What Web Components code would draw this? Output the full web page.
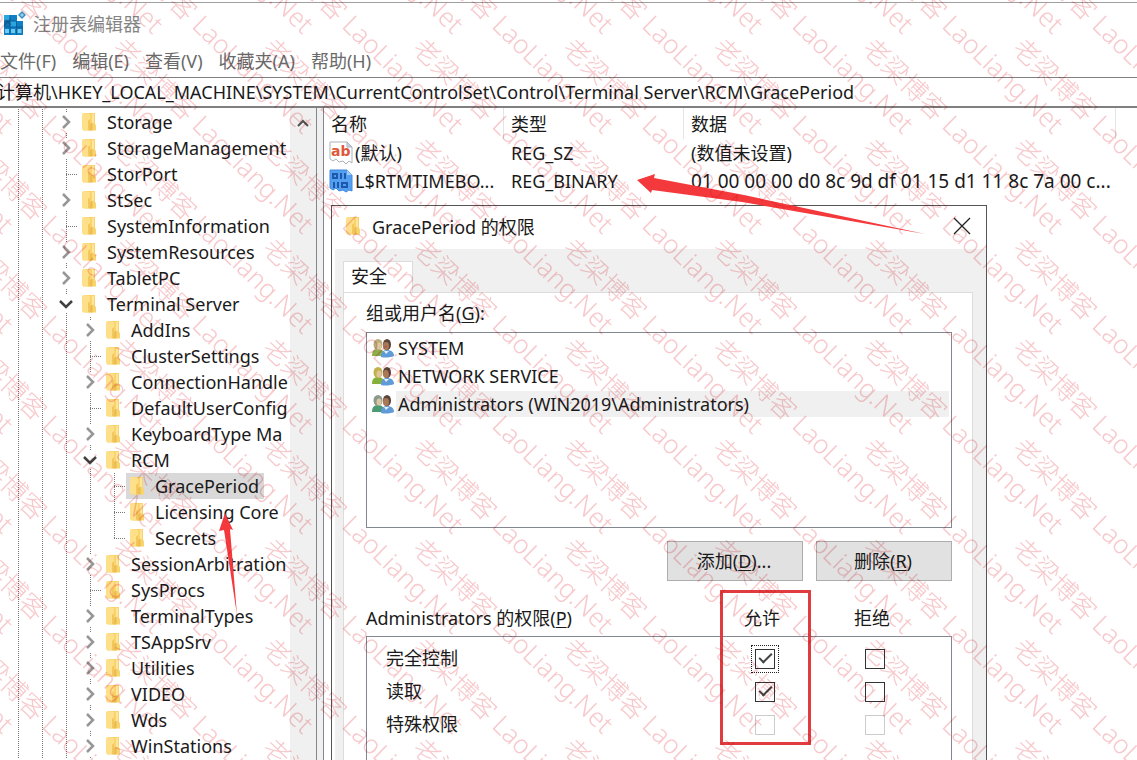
<!DOCTYPE html>
<html lang="zh-CN">
<head>
<meta charset="utf-8">
<title>注册表编辑器</title>
<style>
    html, body{
        margin: 0;
        height: 100%;
        overflow: hidden;
        background: #fff;
        font-family: "Noto Sans", "Noto Sans CJK SC", sans-serif;
        font-size: 18px;
        color: #1a1a1a;
    }
</style>
</head>
<body>

<reg-editor>
    <reg-titlebar slot="titulo">注册表编辑器</reg-titlebar>
    <reg-menu slot="menu"></reg-menu>
    <reg-address slot="ruta" valor="计算机\HKEY_LOCAL_MACHINE\SYSTEM\CurrentControlSet\Control\Terminal Server\RCM\GracePeriod"></reg-address>
    <reg-tree slot="arbol"></reg-tree>
    <reg-values slot="valores"></reg-values>
    <perm-dialog slot="dialogo"></perm-dialog>
</reg-editor>
<nota-flechas></nota-flechas>
<marca-agua texto="老梁博客 LaoLiang.Net"></marca-agua>

<script>
const carpeta = `
    <svg class="carpeta" width="14" height="18" viewBox="0 0 14 18" aria-hidden="true">
        <path d="M1 0h12v11l1 1v5.500H1z" fill="#f9d36b"/>
        <path d="M0 1l2-1 6 1v17l-8-1.500z" fill="#ffe08a"/>
        <path d="M6 8l2-2v11.500l-2-.500z" fill="#f3c75c"/>
        <path d="M8 11l2.500-1.500V17.500H8z" fill="#eabd55"/>
        <path d="M10 1h2v9h-2z" fill="#fde69c"/>
    </svg>`;

class RegEditorComponent extends HTMLElement {

    constructor(){
        super();
        this._shadow = this.attachShadow({ mode: 'open' });
    }

    connectedCallback(){
        this._shadow.innerHTML = `
            <style>
                :host{
                    display: flex;
                    flex-direction: column;
                    height: 100vh;
                    overflow: hidden;
                }

                .borde{
                    height: 2px;
                    border-bottom: 1px solid #a0a0a0;
                    flex: none;
                }

                .cuerpo{
                    flex: 1;
                    min-height: 0;
                    display: flex;
                }

                .divisor{
                    width: 6px;
                    flex: none;
                    background: #f0f0f0;
                    border-left: 1px solid #828790;
                    border-right: 1px solid #828790;
                }

                .panel{
                    flex: 1;
                    min-width: 0;
                    position: relative;
                }
            </style>

            <div class="borde"></div>
            <slot name="titulo"></slot>
            <slot name="menu"></slot>
            <slot name="ruta"></slot>
            <div class="cuerpo">
                <slot name="arbol"></slot>
                <div class="divisor"></div>
                <div class="panel">
                    <slot name="valores"></slot>
                    <slot name="dialogo"></slot>
                </div>
            </div>
        `;
    }
}

class RegTitlebarComponent extends HTMLElement {

    constructor(){
        super();
        this._shadow = this.attachShadow({ mode: 'open' });
    }

    connectedCallback(){
        this._shadow.innerHTML = `
            <style>
                :host{
                    display: flex;
                    align-items: center;
                    gap: 7px;
                    height: 40px;
                    padding: 0 0 2px 3px;
                    flex: none;
                    color: #858585;
                }
            </style>

            <svg width="23" height="24" viewBox="0 0 23 24" aria-hidden="true">
                <path d="M1 4h13v6h6v14H1z" fill="#0f80c4"/>
                <path d="M1 4h6v6H1zM7 10h6v6H7z" fill="#29a5df"/>
                <path d="M1 10h6v6H1zM14 16h6v6h-6z" fill="#1173b4"/>
                <path d="M2 18h4v4H2zM8 18h4v4H8zM14.500 18h4v4h-4z" fill="#6ccaf0"/>
                <path d="M1 10h12M1 16h19M7 4v20M13.500 10v14" stroke="#0a5f9c" stroke-width="1"/>
                <path d="M19 0l4 4-4 4-4-4z" fill="#3a8fc2"/>
                <path d="M19 2l2 2-2 2-2-2z" fill="#8ed2ee"/>
            </svg>
            <slot></slot>
        `;
    }
}

class RegMenuComponent extends HTMLElement {

    constructor(){
        super();
        this._shadow = this.attachShadow({ mode: 'open' });
        this.opciones = ["文件(F)", "编辑(E)", "查看(V)", "收藏夹(A)", "帮助(H)"];
    }

    connectedCallback(){
        this._shadow.innerHTML = `
            <style>
                :host{
                    display: block;
                    height: 32px;
                    flex: none;
                }

                nav{
                    display: flex;
                    gap: 16px;
                }

                button{
                    font: inherit;
                    line-height: 32px;
                    color: #6a6a6a;
                    background: none;
                    border: none;
                    padding: 0;
                }
            </style>

            <nav>${this.opciones.map(o => `<button>${o}</button>`).join("")}</nav>
        `;
    }
}

class RegAddressComponent extends HTMLElement {

    constructor(){
        super();
        this._shadow = this.attachShadow({ mode: 'open' });
    }

    connectedCallback(){
        this._shadow.innerHTML = `
            <style>
                :host{
                    display: block;
                    flex: none;
                    border-top: 1px solid #808080;
                    border-bottom: 2px solid #808080;
                    overflow: hidden;
                }

                input{
                    display: block;
                    box-sizing: border-box;
                    width: 100%;
                    height: 28px;
                    margin-left: -3px;
                    padding: 0 0 2px;
                    border: none;
                    outline: none;
                    background: #fff;
                    font: inherit;
                    color: inherit;
                }
            </style>

            <input type="text" aria-label="地址">
        `;

        this._shadow.querySelector("input").value = this.getAttribute("valor");
    }
}

class RegTreeComponent extends HTMLElement {

    constructor(){
        super();
        this._shadow = this.attachShadow({ mode: 'open' });

        // [nivel, estado, nombre] -- estado: > cerrado, v abierto, - hoja, L ultima hoja
        this.nodos = [
            [2, ">", "Storage"],
            [2, ">", "StorageManagement"],
            [2, "-", "StorPort"],
            [2, ">", "StSec"],
            [2, "-", "SystemInformation"],
            [2, ">", "SystemResources"],
            [2, ">", "TabletPC"],
            [2, "v", "Terminal Server"],
            [3, ">", "AddIns"],
            [3, "-", "ClusterSettings"],
            [3, ">", "ConnectionHandle"],
            [3, "-", "DefaultUserConfig"],
            [3, ">", "KeyboardType Ma"],
            [3, "v", "RCM"],
            [4, "-", "GracePeriod"],
            [4, "-", "Licensing Core"],
            [4, "L", "Secrets"],
            [3, ">", "SessionArbitration"],
            [3, "-", "SysProcs"],
            [3, ">", "TerminalTypes"],
            [3, ">", "TSAppSrv"],
            [3, ">", "Utilities"],
            [3, ">", "VIDEO"],
            [3, ">", "Wds"],
            [3, ">", "WinStations"]
        ];
        this.seleccionado = "GracePeriod";
    }

    celda(estado){
        if(estado === ">"){
            return `<span class="guia nodo"><svg width="12" height="14" viewBox="0 0 12 14"><path d="M3 1l6 6-6 6" fill="none" stroke="#969696" stroke-width="2.500"/></svg></span>`;
        }
        if(estado === "v"){
            return `<span class="guia nodo"><svg width="14" height="12" viewBox="0 0 14 12"><path d="M1 3l6 6 6-6" fill="none" stroke="#404040" stroke-width="2.500"/></svg></span>`;
        }
        return `<span class="guia rama ${estado === "L" ? "ultima" : ""}"></span>`;
    }

    fila([nivel, estado, nombre]){
        const clase = nombre === this.seleccionado ? "clave sel" : "clave";
        return `
            <li>
                ${`<span class="guia"></span>`.repeat(nivel)}${this.celda(estado)}
                <span class="${clase}">${carpeta}${nombre}</span>
            </li>`;
    }

    connectedCallback(){
        this._shadow.innerHTML = `
            <style>
                :host{
                    display: flex;
                    flex: none;
                    width: 316px;
                    overflow: hidden;
                }

                ul{
                    flex: 1;
                    min-width: 0;
                    overflow: hidden;
                    list-style: none;
                    margin: 0;
                    padding: 1px 0 0 6px;
                }

                li{
                    display: flex;
                    height: 26px;
                    line-height: 26px;
                    white-space: nowrap;
                }

                .guia{
                    flex: none;
                    width: 24px;
                    background: repeating-linear-gradient(#777 0 1px, transparent 1px 2px) 12px 0 / 1px 100% no-repeat;
                }

                .rama{
                    background:
                        repeating-linear-gradient(#777 0 1px, transparent 1px 2px) 12px 0 / 1px 100% no-repeat,
                        repeating-linear-gradient(90deg, #777 0 1px, transparent 1px 2px) 12px 13px / 12px 1px no-repeat;
                }

                .ultima{
                    background-size: 1px 13px, 12px 1px;
                }

                .nodo{
                    display: flex;
                    align-items: center;
                    justify-content: center;
                }

                .nodo svg{
                    background: #fff;
                    padding: 3px 0;
                }

                .clave{
                    display: flex;
                    align-items: center;
                    padding: 0 5px 0 4px;
                }

                .carpeta{
                    flex: none;
                    margin-right: 11px;
                }

                .sel{
                    background: #d9d9d9;
                }

                .barra{
                    flex: none;
                    width: 26px;
                    background: #f0f0f0;
                    display: flex;
                    justify-content: center;
                }

                .barra button{
                    width: 26px;
                    height: 30px;
                    padding: 0;
                    border: none;
                    background: none;
                }
            </style>

            <ul>${this.nodos.map(n => this.fila(n)).join("")}</ul>
            <div class="barra">
                <button aria-label="向上滚动">
                    <svg width="12" height="10" viewBox="0 0 12 10"><path d="M1 8l5-5 5 5" fill="none" stroke="#505050" stroke-width="2"/></svg>
                </button>
            </div>
        `;
    }
}

class RegValuesComponent extends HTMLElement {

    constructor(){
        super();
        this._shadow = this.attachShadow({ mode: 'open' });
    }

    connectedCallback(){
        this._shadow.innerHTML = `
            <style>
                :host{
                    display: block;
                }

                table{
                    width: 100%;
                    table-layout: fixed;
                    border-collapse: collapse;
                }

                th, td{
                    padding: 0 0 0 7px;
                    height: 28px;
                    line-height: 28px;
                    text-align: left;
                    font-weight: normal;
                    white-space: nowrap;
                }

                th{
                    height: 31px;
                    background: linear-gradient(#e5e5e5, #e5e5e5) right / 1px 100% no-repeat;
                }

                th:last-child{
                    background: none;
                }

                td:first-child{
                    padding-left: 5px;
                }

                .nombre{
                    display: flex;
                    align-items: center;
                    gap: 2px;
                }

                .nombre svg{
                    flex: none;
                }

                .binario{
                    font-size: 19px;
                }

                .c1{ width: 180px; }
                .c2{ width: 180px; }
                .c4{ width: 21px; }
            </style>

            <table>
                <colgroup><col class="c1"><col class="c2"><col><col class="c4"></colgroup>
                <thead>
                    <tr><th>名称</th><th>类型</th><th>数据</th><th></th></tr>
                </thead>
                <tbody>
                    <tr>
                        <td><div class="nombre">
                            <svg width="24" height="24" viewBox="0 0 24 24" aria-hidden="true">
                                <path d="M1 1h17l5 5v16l-3-2-3 3-3-3-4 1-3-3-3 2-3-2z" fill="#fff" stroke="#a9b3bd"/>
                                <path d="M18 1v5h5z" fill="#c9d2da" stroke="#a9b3bd"/>
                                <text x="2" y="15" font-family="DejaVu Sans, sans-serif" font-size="14" font-weight="bold" fill="#e0583a">ab</text>
                            </svg>
                            <span>(默认)</span>
                        </div></td>
                        <td>REG_SZ</td>
                        <td>(数值未设置)</td>
                        <td></td>
                    </tr>
                    <tr>
                        <td><div class="nombre">
                            <svg width="24" height="24" viewBox="0 0 24 24" aria-hidden="true">
                                <path d="M1 1h17l5 5v16l-3-1-3 2-3-2-4 1-3-3-3 2-3-2z" fill="#559ff0" stroke="#3f8ade"/>
                                <path d="M18 1v5h5z" fill="#9fccf8"/>
                                <g fill="none" stroke="#1c58ad" stroke-width="2">
                                    <rect x="4" y="5" width="4" height="4"/>
                                    <path d="M12 4v6M16 4v6M5 13v6M9 13v6"/>
                                    <rect x="13" y="14" width="5" height="4"/>
                                </g>
                            </svg>
                            <span>L$RTMTIMEBO...</span>
                        </div></td>
                        <td>REG_BINARY</td>
                        <td class="binario">01 00 00 00 d0 8c 9d df 01 15 d1 11 8c 7a 00 c...</td>
                        <td></td>
                    </tr>
                </tbody>
            </table>
        `;
    }
}

class PermDialogComponent extends HTMLElement {

    constructor(){
        super();
        this._shadow = this.attachShadow({ mode: 'open' });

        this.grupos = [
            ["SYSTEM", "#b8ad79", "#8fae4a"],
            ["NETWORK SERVICE", "#c3b04a", "#86b03c"],
            ["Administrators (WIN2019\\Administrators)", "#8b9a8c", "#4b9a74"]
        ];
        this.grupoActual = 2;

        this.permisos = [
            { nombre: "完全控制", permitir: true, clase: "foco" },
            { nombre: "读取", permitir: true, clase: "" },
            { nombre: "特殊权限", permitir: false, clase: "gris" }
        ];
    }

    iconoUsuarios(pelo, ropa){
        return `
            <svg width="22" height="20" viewBox="0 0 22 20" aria-hidden="true">
                <path d="M0 18c0-5 2-7 6-7s6 2 6 7z" fill="${ropa}"/>
                <ellipse cx="6" cy="6.500" rx="4.500" ry="5.500" fill="${pelo}"/>
                <ellipse cx="7" cy="8" rx="2.500" ry="3.500" fill="#dcc7a0"/>
                <path d="M9 19c0-5 2-7 6-7s7 2 7 6c-3 1.500-9 2-13 1z" fill="#5f9bd8"/>
                <ellipse cx="15" cy="6.500" rx="4" ry="5.500" fill="#5a4438"/>
                <ellipse cx="14" cy="8" rx="3" ry="4" fill="#a87858"/>
                <path d="M12 13l2 3 3-3z" fill="#e8f1fa"/>
            </svg>`;
    }

    connectedCallback(){

        const grupos = this.grupos.map(([nombre, pelo, ropa], i) => `
            <li>${this.iconoUsuarios(pelo, ropa)}<span class="${i === this.grupoActual ? "sel" : ""}">${nombre}</span></li>
        `).join("");

        const permisos = this.permisos.map(p => `
            <tr class="${p.clase}">
                <td>${p.nombre}</td>
                <td><span class="marco"><input type="checkbox" aria-label="允许 ${p.nombre}" ${p.permitir ? "checked" : ""} ${p.clase === "gris" ? "disabled" : ""}></span></td>
                <td><input type="checkbox" aria-label="拒绝 ${p.nombre}" ${p.clase === "gris" ? "disabled" : ""}></td>
                <td></td>
            </tr>
        `).join("");

        this._shadow.innerHTML = `
            <style>
                :host{
                    position: absolute;
                    top: 97px;
                    left: 7px;
                    width: 654px;
                    height: 740px;
                    display: flex;
                    flex-direction: column;
                    background: #fff;
                    border: 1px solid #555;
                }

                u{
                    text-underline-offset: 2px;
                    text-decoration-thickness: 1px;
                }

                header{
                    display: flex;
                    align-items: center;
                    gap: 12px;
                    height: 39px;
                    padding: 0 15px 4px 14px;
                }

                header span{
                    flex: 1;
                }

                header button{
                    width: 18px;
                    height: 18px;
                    padding: 0;
                    border: none;
                    background: none;
                    line-height: 0;
                }

                .fondo{
                    flex: 1;
                    display: flex;
                    flex-direction: column;
                    align-items: stretch;
                    margin-left: 3px;
                    padding: 12px 13px 0 8px;
                    background: #f0f0f0;
                }

                .pestana{
                    align-self: flex-start;
                    font: inherit;
                    line-height: 28px;
                    padding: 0 25px 2px 7px;
                    border: 1px solid #dcdcdc;
                    border-bottom: none;
                    background: #fff;
                    color: inherit;
                }

                .hoja{
                    flex: 1;
                    padding: 8px 20px 0 22px;
                    border: 1px solid #dcdcdc;
                    background: #fff;
                }

                .hoja > p{
                    margin: 0 0 6px;
                    line-height: 25px;
                }

                ul{
                    list-style: none;
                    margin: 0;
                    padding: 1px 2px 0 5px;
                    height: 193px;
                    border: 1px solid #828790;
                }

                li{
                    display: flex;
                    align-items: center;
                    gap: 2px;
                    height: 28px;
                    line-height: 26px;
                }

                li span{
                    flex: 1;
                    padding-left: 2px;
                }

                .sel{
                    background: #f0f0f0;
                }

                .botones{
                    display: flex;
                    justify-content: flex-end;
                    gap: 13px;
                    padding: 13px 0;
                }

                .botones button{
                    width: 136px;
                    height: 40px;
                    padding: 0 2px 2px 0;
                    font: inherit;
                    color: inherit;
                    background: #e1e1e1;
                    border: 1px solid #adadad;
                }

                table{
                    width: 100%;
                    table-layout: fixed;
                    border-spacing: 0;
                }

                .c2{ width: 110px; }
                .c4{ width: 22px; }

                th{
                    height: 43px;
                    padding: 4px 6px 0 0;
                    box-sizing: border-box;
                    font-weight: normal;
                    border-bottom: 1px solid #828790;
                }

                th:first-child{
                    text-align: left;
                    padding: 4px 0 0;
                }

                td{
                    height: 33px;
                    padding: 0;
                    line-height: 33px;
                    text-align: center;
                }

                tr.foco td{
                    padding-top: 5px;
                }

                td:first-child{
                    text-align: left;
                    padding-left: 19px;
                    border-left: 1px solid #828790;
                }

                td:last-child{
                    border-right: 1px solid #828790;
                }

                .relleno td{
                    height: 100px;
                }

                input{
                    appearance: none;
                    position: relative;
                    display: block;
                    width: 20px;
                    height: 20px;
                    margin: 0 auto;
                    border: 1px solid #333;
                    background: #fff;
                }

                input:disabled{
                    border-color: #ccc;
                }

                input:checked::before{
                    content: "";
                    position: absolute;
                    left: 3px;
                    top: 3px;
                    width: 11px;
                    height: 5px;
                    border-left: 2px solid #444;
                    border-bottom: 2px solid #444;
                    transform: rotate(-45deg);
                }

                .marco{
                    display: block;
                }

                .foco .marco{
                    width: 20px;
                    margin: 0 auto;
                    outline: 1px dotted #222;
                    outline-offset: 3px;
                }

                .aviso{
                    position: absolute;
                    top: 384px;
                    left: 388px;
                    width: 85px;
                    height: 149px;
                    border: 3px solid #e03c40;
                }
            </style>

            <header>
                ${carpeta}
                <span>GracePeriod 的权限</span>
                <button aria-label="关闭"><svg width="18" height="18" viewBox="0 0 18 18"><path d="M1 1l16 16M17 1L1 17" stroke="#222" stroke-width="1.300"/></svg></button>
            </header>
            <div class="fondo">
                <button class="pestana">安全</button>
                <div class="hoja">
                    <p>组或用户名(<u>G</u>):</p>
                    <ul>${grupos}</ul>
                    <div class="botones">
                        <button>添加(<u>D</u>)...</button>
                        <button>删除(<u>R</u>)</button>
                    </div>
                    <table>
                        <colgroup><col><col class="c2"><col class="c2"><col class="c4"></colgroup>
                        <thead>
                            <tr><th>Administrators 的权限(<u>P</u>)</th><th>允许</th><th>拒绝</th><th></th></tr>
                        </thead>
                        <tbody>
                            ${permisos}
                            <tr class="relleno"><td></td><td></td><td></td><td></td></tr>
                        </tbody>
                    </table>
                </div>
            </div>
            <div class="aviso"></div>
        `;
    }
}

class NotaFlechasComponent extends HTMLElement {

    constructor(){
        super();
        this._shadow = this.attachShadow({ mode: 'open' });
    }

    connectedCallback(){
        this._shadow.innerHTML = `
            <style>
                :host{
                    position: absolute;
                    inset: 0;
                    pointer-events: none;
                }
            </style>

            <svg width="100%" height="100%" aria-hidden="true">
                <g fill="#f4393c">
                    <path d="M637 180l18-6-1 4 90 17 181 39-183-32-90-12-1 3z"/>
                    <path d="M225 513l8 17-3-1 7 86-13-85-5 1z"/>
                </g>
            </svg>
        `;
    }
}

class MarcaAguaComponent extends HTMLElement {

    constructor(){
        super();
        this._shadow = this.attachShadow({ mode: 'open' });
    }

    connectedCallback(){
        this._shadow.innerHTML = `
            <style>
                :host{
                    position: absolute;
                    inset: 0;
                    overflow: hidden;
                    pointer-events: none;
                    mix-blend-mode: multiply;
                }

                text{
                    font-size: 26px;
                    font-weight: 300;
                    fill: #f7c9cc;
                }
            </style>

            <svg width="100%" height="100%" aria-hidden="true"></svg>
        `;

        this.repetir();
    }

    repetir(){
        const texto = this.getAttribute("texto");
        let marcas = "";

        for(let y = -250; y < window.innerHeight; y += 100){
            for(let x = -189; x < window.innerWidth; x += 150){
                marcas += `<text transform="translate(${x} ${y}) rotate(44)">${texto}</text>`;
            }
        }

        this._shadow.querySelector("svg").innerHTML = marcas;
    }
}

customElements.define("reg-editor", RegEditorComponent);
customElements.define("reg-titlebar", RegTitlebarComponent);
customElements.define("reg-menu", RegMenuComponent);
customElements.define("reg-address", RegAddressComponent);
customElements.define("reg-tree", RegTreeComponent);
customElements.define("reg-values", RegValuesComponent);
customElements.define("perm-dialog", PermDialogComponent);
customElements.define("nota-flechas", NotaFlechasComponent);
customElements.define("marca-agua", MarcaAguaComponent);
</script>
</body>
</html>
